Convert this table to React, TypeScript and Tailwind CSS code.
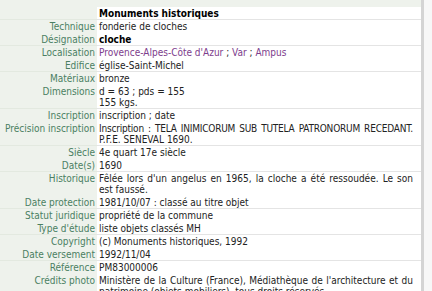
import React from "react"

type Row = {
  label: string
  value: React.ReactNode
  bold?: boolean
}

const link = "text-[#7d3d8c]"

const rows: Row[] = [
  { label: "Technique", value: "fonderie de cloches" },
  { label: "Désignation", value: "cloche", bold: true },
  {
    label: "Localisation",
    value: (
      <>
        <span className={link}>Provence-Alpes-Côte d'Azur</span> ; <span className={link}>Var</span> ;{" "}
        <span className={link}>Ampus</span>
      </>
    ),
  },
  { label: "Edifice", value: "église-Saint-Michel" },
  { label: "Matériaux", value: "bronze" },
  {
    label: "Dimensions",
    value: (
      <>
        d = 63 ; pds = 155
        <br />
        155 kgs.
      </>
    ),
  },
  { label: "Inscription", value: "inscription ; date" },
  {
    label: "Précision inscription",
    value: (
      <>
        <span className="block whitespace-nowrap tracking-[-0.2px] [text-align-last:justify]">
          Inscription : TELA INIMICORUM SUB TUTELA PATRONORUM RECEDANT.
        </span>
        <span className="block">P.F.E. SENEVAL 1690.</span>
      </>
    ),
  },
  { label: "Siècle", value: "4e quart 17e siècle" },
  { label: "Date(s)", value: "1690" },
  {
    label: "Historique",
    value: "Fêlée lors d'un angelus en 1965, la cloche a été ressoudée. Le son est faussé.",
  },
  { label: "Date protection", value: "1981/10/07 : classé au titre objet" },
  { label: "Statut juridique", value: "propriété de la commune" },
  { label: "Type d'étude", value: "liste objets classés MH" },
  { label: "Copyright", value: "(c) Monuments historiques, 1992" },
  { label: "Date versement", value: "1992/11/04" },
  { label: "Référence", value: "PM83000006" },
  {
    label: "Crédits photo",
    value:
      "Ministère de la Culture (France), Médiathèque de l'architecture et du patrimoine (objets mobiliers), tous droits réservés",
  },
]

function NoticeRow({ row, index }: { row: Row; index: number }) {
  // line under every second row, like the original listing
  const lined = index % 2 === 1
  return (
    <tr>
      <td
        className={
          lined
            ? "w-[97px] bg-[#eef2ec] pr-[2px] pt-px text-right align-top whitespace-nowrap text-[#4a7f62] border-b border-[#e3e9e0]"
            : "w-[97px] bg-[#eef2ec] pr-[2px] pt-px text-right align-top whitespace-nowrap text-[#4a7f62] border-b border-transparent"
        }
      >
        {row.label}
      </td>
      <td
        className={
          lined
            ? "bg-white pl-[2px] pr-[8px] pt-px text-justify align-top text-[#222] border-b border-[#e4e4e4]"
            : "bg-white pl-[2px] pr-[8px] pt-px text-justify align-top text-[#222] border-b border-transparent"
        }
      >
        {row.bold ? <b className="text-black">{row.value}</b> : row.value}
      </td>
    </tr>
  )
}

export default function App() {
  return (
    <div className="flex h-[291px] w-[432px] overflow-hidden bg-white font-['DejaVu_Sans_Condensed','DejaVu_Sans',sans-serif] text-[10px] leading-[11px]">
      <div className="w-[421px] shrink-0 bg-[#eef2ec] pt-[7px]">
        <table className="w-full table-fixed border-collapse">
          <colgroup>
            <col className="w-[97px]" />
            <col />
          </colgroup>
          <tbody>
            <tr>
              <td className="bg-[#eef2ec] border-b border-[#e3e9e0]" />
              <td className="bg-white pl-[2px] pt-px font-bold text-black border-b border-[#e4e4e4]">
                Monuments historiques
              </td>
            </tr>
            {rows.map((row, i) => (
              <NoticeRow key={row.label} row={row} index={i} />
            ))}
          </tbody>
        </table>
      </div>
      <div className="w-[3px] shrink-0 bg-[#d4d4d4]" />
      <div className="flex-1 bg-[#f7f7f7]" />
    </div>
  )
}
